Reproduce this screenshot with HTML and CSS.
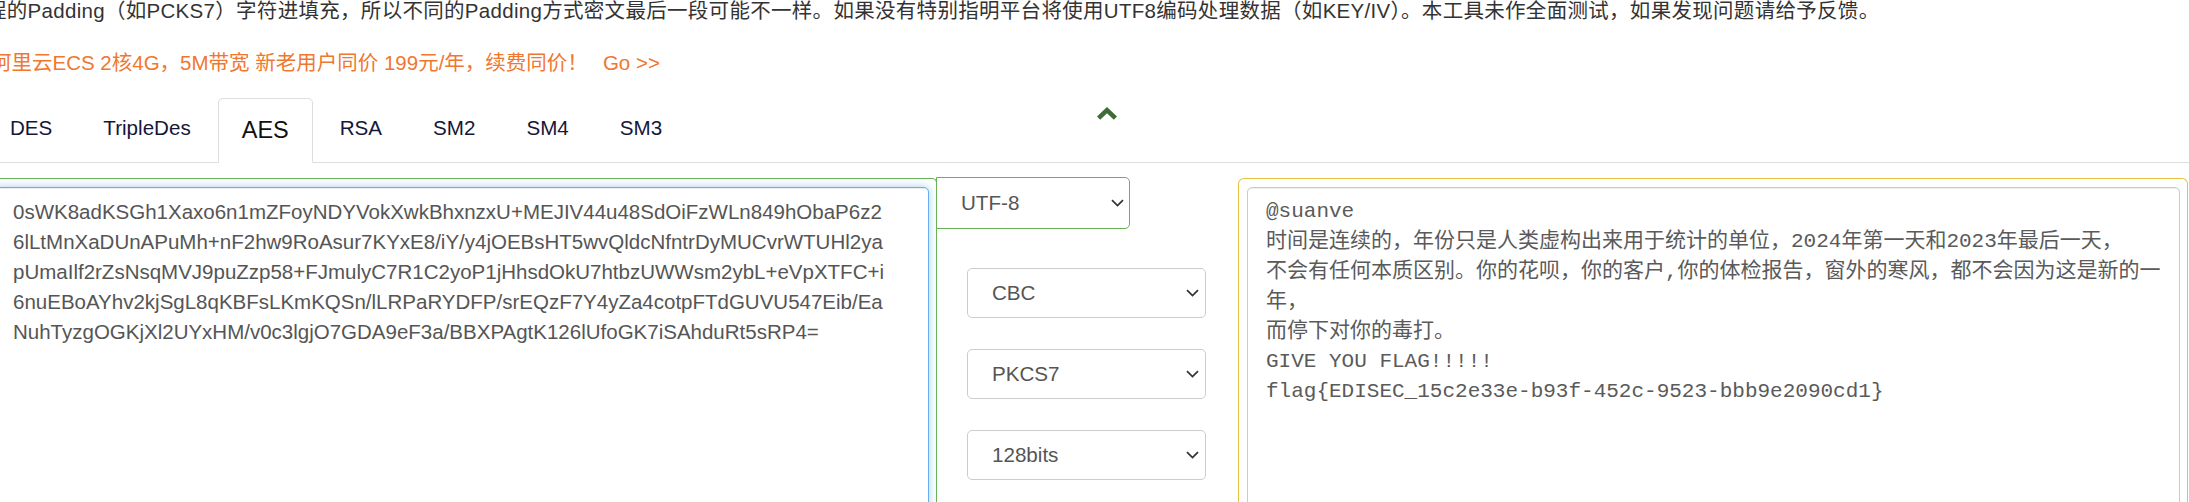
FILE: index.html
```html
<!DOCTYPE html>
<html lang="zh-CN">
<head>
<meta charset="utf-8">
<title>AES 在线加密解密</title>
<link rel="stylesheet" href="styles.css">
</head>
<body>
<div class="page">
  <p class="intro">程的Padding（如PCKS7）字符进填充，所以不同的Padding方式密文最后一段可能不一样。如果没有特别指明平台将使用UTF8编码处理数据（如KEY/IV）。本工具未作全面测试，如果发现问题请给予反馈。</p>
  <p class="promo"><span>阿里云ECS 2核4G，5M带宽 新老用户同价 199元/年，续费同价！</span><a class="go">Go &gt;&gt;</a></p>

  <div class="tabbar">
    <ul class="tabs">
      <li><a>DES</a></li>
      <li><a>TripleDes</a></li>
      <li class="active"><a>AES</a></li>
      <li><a>RSA</a></li>
      <li><a>SM2</a></li>
      <li><a>SM4</a></li>
      <li><a>SM3</a></li>
    </ul>
    <svg class="toggle" width="20" height="13" viewBox="0 0 20 13"><polygon points="10,0 20,9.5 16.8,12.8 10,6.3 3.2,12.8 0,9.5"/></svg>
  </div>

  <div class="workspace">
    <div class="col-input">
      <div class="area area-focus">0sWK8adKSGh1Xaxo6n1mZFoyNDYVokXwkBhxnzxU+MEJIV44u48SdOiFzWLn849hObaP6z2
6lLtMnXaDUnAPuMh+nF2hw9RoAsur7KYxE8/iY/y4jOEBsHT5wvQldcNfntrDyMUCvrWTUHl2ya
pUmaIlf2rZsNsqMVJ9puZzp58+FJmulyC7R1C2yoP1jHhsdOkU7htbzUWWsm2ybL+eVpXTFC+i
6nuEBoAYhv2kjSgL8qKBFsLKmKQSn/lLRPaRYDFP/srEQzF7Y4yZa4cotpFTdGUVU547Eib/Ea
NuhTyzgOGKjXl2UYxHM/v0c3lgjO7GDA9eF3a/BBXPAgtK126lUfoGK7iSAhduRt5sRP4=</div>
    </div>

    <div class="col-opts">
      <div class="select select-enc"><span>UTF-8</span><svg class="caret" width="13" height="8" viewBox="0 0 13 8"><path d="M1 1.2 L6.5 6.6 L12 1.2"/></svg></div>
      <div class="opts">
        <div class="select"><span>CBC</span><svg class="caret" width="13" height="8" viewBox="0 0 13 8"><path d="M1 1.2 L6.5 6.6 L12 1.2"/></svg></div>
        <div class="select"><span>PKCS7</span><svg class="caret" width="13" height="8" viewBox="0 0 13 8"><path d="M1 1.2 L6.5 6.6 L12 1.2"/></svg></div>
        <div class="select"><span>128bits</span><svg class="caret" width="13" height="8" viewBox="0 0 13 8"><path d="M1 1.2 L6.5 6.6 L12 1.2"/></svg></div>
      </div>
    </div>

    <div class="col-output">
      <div class="area area-mono">@suanve
时间是连续的，年份只是人类虚构出来用于统计的单位，2024年第一天和2023年最后一天，
不会有任何本质区别。你的花呗，你的客户,你的体检报告，窗外的寒风，都不会因为这是新的一
年，
而停下对你的毒打。
GIVE YOU FLAG!!!!!
flag{EDISEC_15c2e33e-b93f-452c-9523-bbb9e2090cd1}</div>
    </div>
  </div>
</div>
</body>
</html>
```

FILE: styles.css
```css
html, body {
  margin: 0;
  padding: 0;
  background: #fff;
}
body {
  width: 2189px;
  height: 502px;
  overflow: hidden;
  font-family: "Liberation Sans", "Noto Sans CJK SC", sans-serif;
  font-size: 20.5px;
  line-height: 30px;
  color: #333;
}
.page {
  margin-left: -14px;
  margin-top: -4px;
  width: 2210px;
}
.intro {
  margin: 0;
  white-space: nowrap;
  letter-spacing: 0.3px;
  color: #333;
}
.promo {
  margin: 22px 0 0;
  padding-left: 5px;
  white-space: nowrap;
  color: #f0772f;
}
.promo .go {
  margin-left: 15px;
  color: #f0772f;
}

.tabbar {
  margin-top: 20px;
  display: flex;
  align-items: flex-start;
  border-bottom: 1px solid #ddd;
}
.tabs {
  list-style: none;
  margin: 0;
  padding: 0;
  display: flex;
  align-items: flex-start;
}
.tabs li {
  margin: 0 3px -1px 0;
}
.tabs a {
  display: block;
  padding: 14px 23px 15px;
  border: 1px solid transparent;
  border-radius: 5px 5px 0 0;
  font-size: 20.6px;
  line-height: 30px;
  color: #15173a;
}
.tabs .active a {
  border-color: #ddd;
  border-bottom-color: transparent;
  background: #fff;
  font-size: 23.5px;
  line-height: 34px;
  color: #111;
}
.toggle {
  margin: 9px 0 0 408px;
  fill: #3e6b36;
}

.workspace {
  margin-top: 14px;
  display: flex;
  align-items: flex-start;
}
.col-input {
  box-sizing: border-box;
  width: 951px;
  height: 340px;
  margin-top: 1px;
  padding: 8px 7px 0;
  border: 1px solid #6ab257;
  border-bottom: none;
  border-radius: 5px 5px 0 0;
}
.area {
  box-sizing: border-box;
  height: 400px;
  padding: 9px 18px;
  border: 1px solid #ccc;
  border-radius: 5px;
  background: #fff;
  color: #555;
  white-space: pre;
  overflow: hidden;
  box-shadow: inset 0 1px 1px rgba(0, 0, 0, .075);
}
.area-focus {
  border-color: #66afe9;
  box-shadow: inset 0 1px 1px rgba(0, 0, 0, .075), 0 0 8px rgba(102, 175, 233, .6);
  font-size: 20.5px;
}
.area-mono {
  font-family: "Liberation Mono", "Noto Sans CJK SC", monospace;
  font-size: 21px;
  color: #5a5a5a;
}

.col-opts {
  box-sizing: border-box;
  width: 302px;
  margin-left: -1px;
}
.select {
  box-sizing: border-box;
  display: flex;
  align-items: center;
  justify-content: space-between;
  width: 239px;
  height: 50px;
  padding: 0 6px 0 24px;
  border: 1px solid #ccc;
  border-radius: 5px;
  background: #fff;
  font-size: 20.6px;
  color: #555;
}
.select-enc {
  width: 194px;
  height: 52px;
  padding-right: 5px;
  border-color: #6ab257;
  border-radius: 0 5px 5px 0;
}
.caret {
  fill: none;
  stroke: #333;
  stroke-width: 1.7;
}
.opts {
  margin-top: 39px;
  padding-left: 31px;
  display: flex;
  flex-direction: column;
  gap: 31px;
}

.col-output {
  box-sizing: border-box;
  width: 950px;
  height: 340px;
  margin-top: 1px;
  padding: 8px 7px 0 8px;
  border: 1px solid #e9c13f;
  border-bottom: none;
  border-radius: 6px 6px 0 0;
}
```
